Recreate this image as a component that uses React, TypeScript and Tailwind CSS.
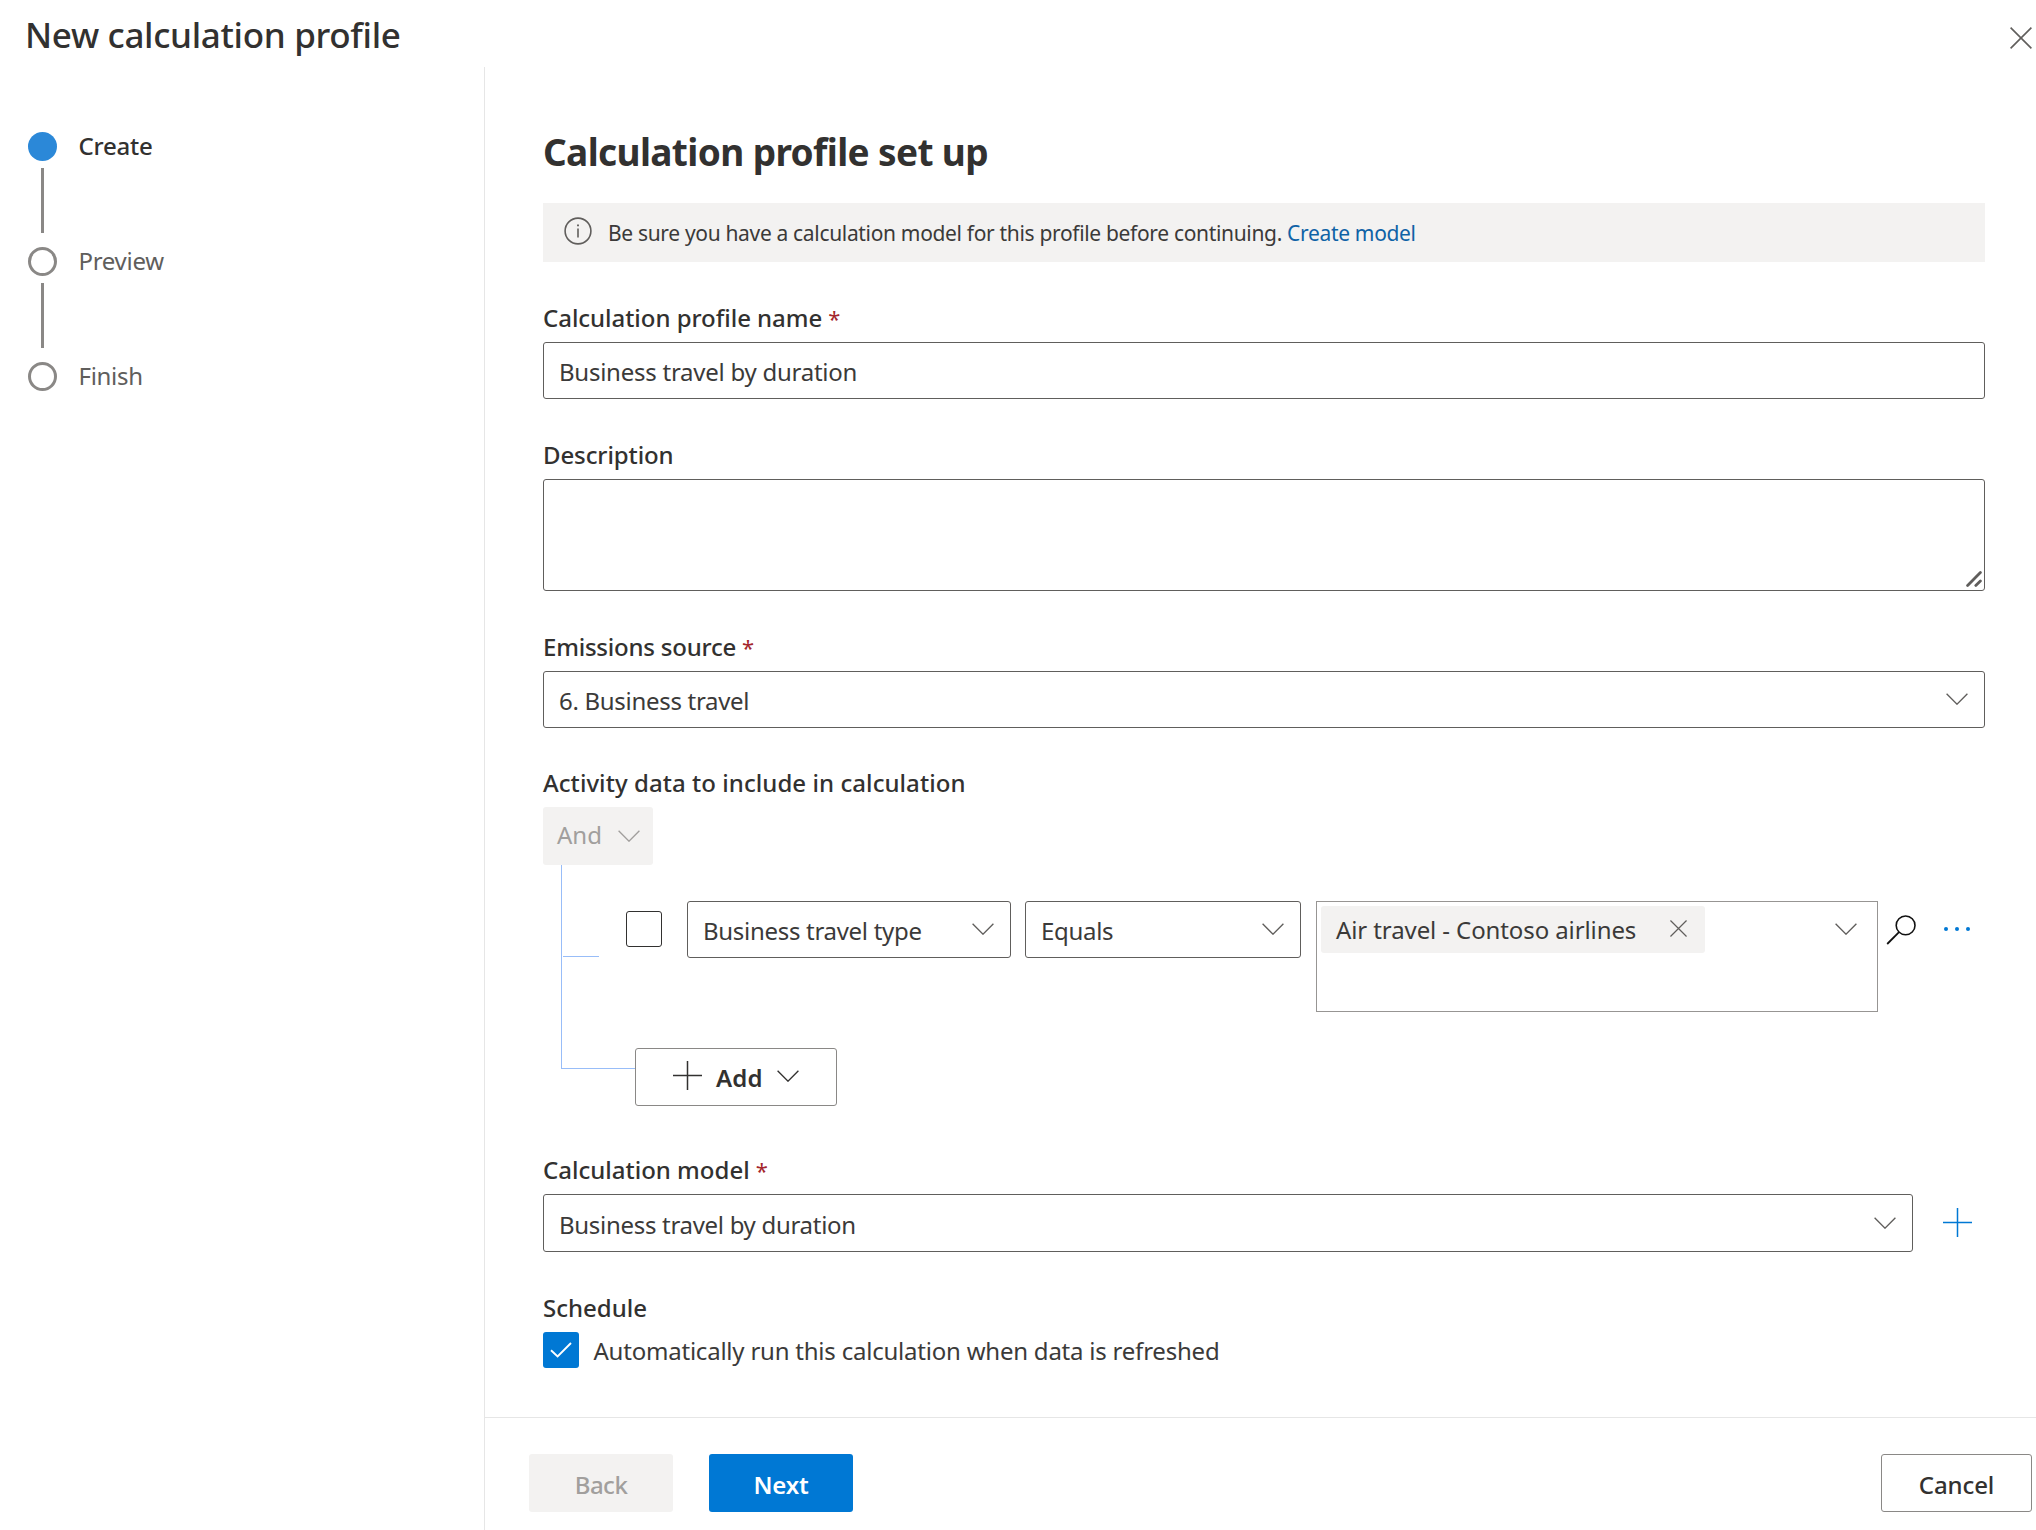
import React from "react";

type IconProps = { className?: string };

function Chevron({ className = "" }: IconProps) {
  return (
    <svg viewBox="0 0 22 12" className={`h-3 w-[22px] shrink-0 ${className}`} fill="none" stroke="currentColor" strokeWidth="1.35">
      <path d="M0.6 0.8 11 11.2 21.4 0.8" />
    </svg>
  );
}

function Cross({ className = "" }: IconProps) {
  return (
    <svg viewBox="0 0 22 22" className={`shrink-0 ${className}`} fill="none" stroke="currentColor" strokeWidth="1.6">
      <path d="M0.6 0.6 21.4 21.4M21.4 0.6 0.6 21.4" />
    </svg>
  );
}

function Plus({ className = "" }: IconProps) {
  return (
    <svg viewBox="0 0 29 29" className={`size-[29px] shrink-0 ${className}`} fill="none" stroke="currentColor" strokeWidth="1.5">
      <path d="M14.5 0V29M0 14.5H29" />
    </svg>
  );
}

function Label({ children, required, className = "" }: { children: React.ReactNode; required?: boolean; className?: string }) {
  return (
    <div className={`flex h-9 items-center text-2xl leading-9 font-medium whitespace-pre text-[#323130] ${className}`}>
      {children}
      {required && <span className="ml-[6px] text-[22px] font-normal text-[#a4262c]">*</span>}
    </div>
  );
}

function Select({ value, className = "" }: { value: string; className?: string }) {
  return (
    <div className={`flex items-center justify-between rounded-[3px] border border-[#605e5c] bg-white pr-4 pl-[15px] ${className}`}>
      <span className="pt-0.5 tracking-[-0.3px]">{value}</span>
      <Chevron className="mb-0.5 text-[#605e5c]" />
    </div>
  );
}

const steps = [
  { name: "Create", active: true },
  { name: "Preview", active: false },
  { name: "Finish", active: false },
];

function Steps() {
  return (
    <nav className="w-[484px] shrink-0 pt-[65px] pl-7">
      {steps.map((step, i) => (
        <div key={step.name} className="flex h-[115px] gap-[21.5px]">
          <div className="flex w-[29px] flex-col items-center">
            <span
              className={`size-[29px] shrink-0 rounded-full ${step.active ? "bg-[#2b88d8]" : "border-[3px] border-[#8a8886]"}`}
            />
            {i < steps.length - 1 && <span className="mt-[7px] h-[65px] w-[3px] bg-[#8a8886]" />}
          </div>
          <span
            className={`-mt-0.5 h-8 leading-8 ${step.active ? "font-medium tracking-[-0.2px] text-[#323130]" : "tracking-[-0.3px] text-[#605e5c]"}`}
          >
            {step.name}
          </span>
        </div>
      ))}
    </nav>
  );
}

function InfoBar() {
  return (
    <div className="mt-[27px] flex h-[59px] items-center bg-[#f3f2f1] pl-[21px] text-[21px] tracking-[-0.33px]">
      <svg viewBox="0 0 28 28" className="mb-[3px] size-7 shrink-0 text-[#605e5c]" fill="none" stroke="currentColor" strokeWidth="1.6">
        <circle cx="14" cy="14" r="12.9" />
        <path d="M14 11.6V20.4" />
        <path d="M14 7.6V9.3" strokeWidth="1.9" />
      </svg>
      <span className="ml-4 whitespace-pre text-[#3b3a39]">
        Be sure you have a calculation model for this profile before continuing.{" "}
        <a className="text-[#0f62a6]">Create model</a>
      </span>
    </div>
  );
}

function FilterBuilder() {
  return (
    <div>
      <div className="mt-1.5 flex h-[58px] w-[110px] items-center justify-between rounded-[3px] bg-[#f3f2f1] pr-[13px] pl-[14px] text-[#a19f9d]">
        <span className="pb-[3px]">And</span>
        <Chevron />
      </div>
      <div className="flex h-[241px]">
        <div className="ml-[18px] h-[204px] w-[74px] shrink-0 border-b border-l border-[#98bdf8] pt-[91px] pl-px">
          <div className="h-px w-9 bg-[#98bdf8]" />
        </div>
        <div className="-ml-[9px] flex-1 pt-9">
          <div className="flex h-[111px] items-start">
            <span className="mt-2.5 size-9 shrink-0 rounded-[3px] border border-[#323130]" />
            <Select value="Business travel type" className="ml-[25px] h-[57px] w-[324px]" />
            <Select value="Equals" className="ml-[14px] h-[57px] w-[276px]" />
            <div className="ml-[15px] flex h-[111px] w-[562px] items-start justify-between border border-[#979593] pt-1 pr-5 pl-1">
              <div className="flex h-[47px] w-[384px] items-center justify-between rounded-[3px] bg-[#f3f2f1] pr-[18px] pl-[15px]">
                <span className="tracking-[-0.1px]">Air travel - Contoso airlines</span>
                <Cross className="mb-0.5 size-[17px] text-[#605e5c]" />
              </div>
              <Chevron className="mt-[17px] text-[#605e5c]" />
            </div>
            <svg viewBox="0 0 30 30" className="mt-[14px] ml-2 size-[30px] shrink-0" fill="none" stroke="#111111" strokeWidth="1.6">
              <circle cx="19.6" cy="10.4" r="9.4" />
              <path d="M13 17.2 1.2 29" strokeWidth="1.8" />
            </svg>
            <svg viewBox="0 0 28 4" className="mt-[25.5px] ml-7 h-1 w-7 shrink-0" fill="#0078d4">
              <circle cx="2" cy="2" r="2" />
              <circle cx="13" cy="2" r="2" />
              <circle cx="24" cy="2" r="2" />
            </svg>
          </div>
          <div className="mt-9 ml-[9px] flex h-[58px] w-[202px] items-center rounded-[3px] border border-[#8a8886] pl-[37px] text-[#323130]">
            <Plus className="mb-1" />
            <span className="ml-[14px] pt-0.5 font-semibold tracking-[0.15px]">Add</span>
            <Chevron className="mb-0.5 ml-[14.5px]" />
          </div>
        </div>
      </div>
    </div>
  );
}

export default function App() {
  return (
    <div className="flex h-[1530px] w-[2036px] flex-col overflow-hidden bg-white font-['Noto_Sans',sans-serif] text-2xl leading-8 text-[#3b3a39]">
      <header className="flex h-[67px] shrink-0 items-start justify-between pr-1 pl-[25px]">
        <h1 className="mt-[11px] text-[35px] leading-[48px] font-medium tracking-[-0.33px] text-[#323130]">New calculation profile</h1>
        <Cross className="mt-[26.5px] size-[22px] text-[#605e5c]" />
      </header>

      <div className="flex flex-1">
        <Steps />
        <div className="flex flex-1 flex-col border-l border-[#e6e6e6]">
          <main className="h-[1350px] pt-[61px] pr-[51px] pl-[58px]">
            <h2 className="text-[37px] leading-[48px] font-bold tracking-[-0.63px] text-[#323130]">Calculation profile set up</h2>
            <InfoBar />

            <Label required className="mt-[38px] tracking-[-0.04px]">Calculation profile name</Label>
            <div className="mt-1.5 flex h-[57px] items-center rounded-[3px] border border-[#605e5c] pl-[15px]">
              <span className="pt-0.5 tracking-[-0.25px]">Business travel by duration</span>
            </div>

            <Label className="mt-[38px] tracking-[-0.1px]">Description</Label>
            <div className="mt-1.5 flex h-28 items-end justify-end rounded-[3px] border border-[#605e5c] pr-0.5 pb-[3px]">
              <svg viewBox="0 0 16 16" className="size-4" fill="none" stroke="#605e5c" strokeWidth="2.8" strokeLinecap="round">
                <path d="M1.6 14.4 14.4 1.6M9.8 14.4 14.4 10" />
              </svg>
            </div>

            <Label required className="mt-[38px] tracking-[-0.22px]">Emissions source</Label>
            <Select value="6. Business travel" className="mt-1.5 h-[57px]" />

            <Label className="mt-[37px] tracking-[0.06px]">Activity data to include in calculation</Label>
            <FilterBuilder />

            <Label required className="mt-[46px]">Calculation model</Label>
            <div className="mt-1.5 flex items-center">
              <Select value="Business travel by duration" className="h-[58px] w-[1370px] pt-px" />
              <Plus className="mb-0.5 ml-[29.5px] text-[#0078d4]" />
            </div>

            <Label className="mt-[38px]">Schedule</Label>
            <div className="mt-1.5 flex h-9 items-center">
              <span className="flex size-9 items-center justify-center rounded-[3px] bg-[#0078d4]">
                <svg viewBox="0 0 22 16" className="h-4 w-[22px]" fill="none" stroke="white" strokeWidth="1.9">
                  <path d="M1 8.2 7.6 14.4 21 1" />
                </svg>
              </span>
              <span className="ml-[14.5px] pt-0.5 tracking-[-0.22px]">Automatically run this calculation when data is refreshed</span>
            </div>
          </main>

          <footer className="flex flex-1 items-start border-t border-[#e6e6e6] pt-9 pr-1 pl-11 leading-[30px]">
            <button className="h-[58px] w-36 rounded-[3px] bg-[#f3f2f1] pt-1 font-medium tracking-[-0.5px] text-[#a19f9d]">Back</button>
            <button className="ml-9 h-[58px] w-36 rounded-[3px] bg-[#0078d4] pt-1 font-semibold tracking-[-0.15px] text-white">Next</button>
            <button className="ml-auto h-[58px] w-[151px] rounded-[3px] border border-[#8a8886] pt-1 font-medium tracking-[-0.1px] text-[#323130]">Cancel</button>
          </footer>
        </div>
      </div>
    </div>
  );
}
